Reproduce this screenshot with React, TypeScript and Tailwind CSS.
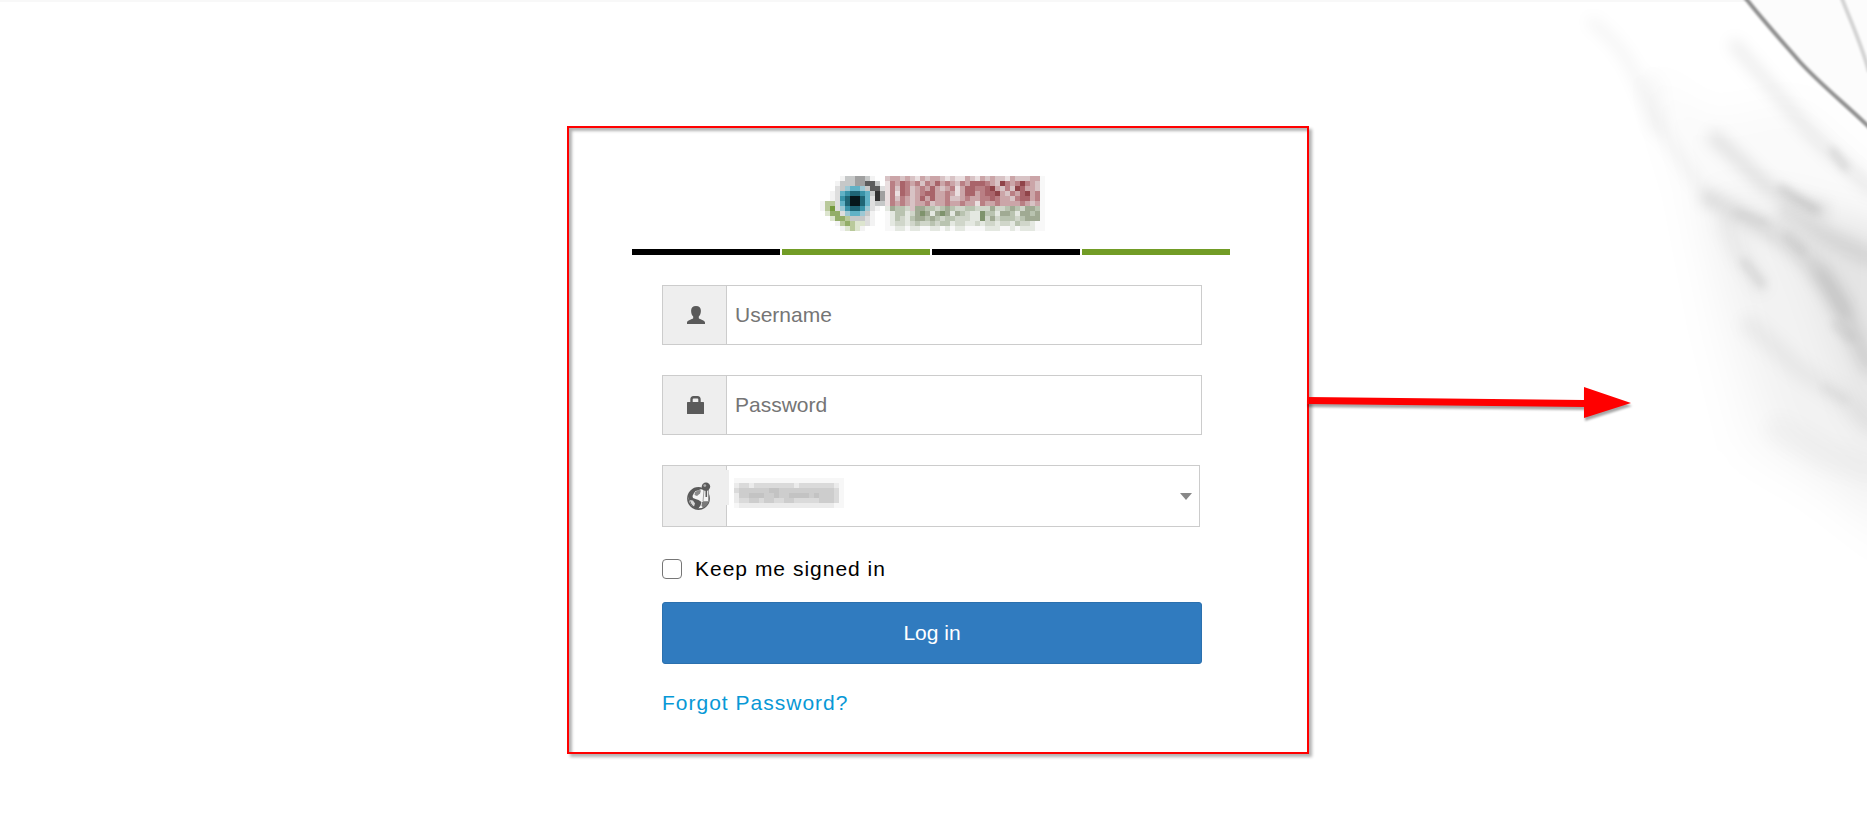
import type { ReactNode } from "react";

const LOGO_COLORS: Record<string, string> = {
  "1": "#f3f3f3",
  "2": "#dedede",
  "3": "#c6c8c8",
  "4": "#a0a0a0",
  "5": "#5c5c5c",
  "6": "#303030",
  a: "#9cc8d4",
  b: "#62b2c6",
  c: "#3a93a8",
  d: "#1f6575",
  e: "#06161a",
  l: "#dde5cf",
  m: "#b9c99b",
  n: "#93ad68",
  o: "#759a3e",
  w: "#f8f8f8",
  p: "#eadfe0",
  q: "#d8c3c5",
  r: "#cba5a8",
  s: "#b97f84",
  t: "#a9646a",
  u: "#904449",
  g: "#e4e8e1",
  h: "#d0d6ca",
  i: "#b9c3b0",
  j: "#a0aa93",
  k: "#7f936d",
};

const LOGO_ROWS = [
  "....1334431..qrrqrqprqrrqpqpprqprqrqqprqqqrrw",
  "...133344553.psrtsrsqsrtrsrqsrtttsrqusrsusrqw",
  "...23abba3552psqtsqrsrtrqrsprttssturqsqutrrqw",
  "..12bcddcb364psptsqrsttrrsrprttrstturqsrtursw",
  "..12cdeedb264psqsrqrtrtrrsqqrsrrsstsrrqsttrsw",
  "1mm2bdeedb233psrsrqrrsqrrsrrsrrpsrrsrrrrsrqrw",
  "1mo2acddca21.gjiihqjjiihijihhiihhhjhhijihjjiw",
  ".lnn2abba31..wgiighjkjgjkjgjihggkiigjjigjjijw",
  "..lnnm33321..wgihgijjijihiihhhggkhjhiiihijjjw",
  "...1mnmll21..wghhghihhihiighhgghghhghhgihhgww",
  "....1lml1....wwggwggwwggwgwggwwwwgggwwgwgggww",
];

const NAME_COLORS: Record<string, string> = {
  "1": "#f7f7f7",
  "2": "#ebebeb",
  "3": "#dadada",
  "4": "#cdcdcd",
  "5": "#c3c3c3",
};

const NAME_ROWS = [
  "1111111111111111111111",
  "2332333333332333333321",
  "3444444554444444444431",
  "2445554454455554544431",
  "2334434433443333344431",
  "1222222222222222222211",
];

interface MosaicProps {
  rows: string[];
  colors: Record<string, string>;
  label: string;
}

function Mosaic({ rows, colors, label }: MosaicProps) {
  const width = rows[0].length * 5;
  const height = rows.length * 5;
  return (
    <svg role="img" aria-label={label} width={width} height={height} shapeRendering="crispEdges">
      {rows.map((row, y) =>
        row.split("").map((cell, x) =>
          colors[cell] ? <rect key={`${x}-${y}`} x={x * 5} y={y * 5} width="5" height="5" fill={colors[cell]} /> : null
        )
      )}
    </svg>
  );
}

function UserIcon() {
  return (
    <svg width="18" height="18" viewBox="0 0 18 18" fill="#5a5a5a" aria-hidden="true">
      <path d="M9 0c3.200 0 4.900 1.700 4.900 4.700 0 2.600-.8 4.600-2.100 5.800v1.700c1 1.300 6.200 1.800 6.200 4.300V18H0v-1.500c0-2.500 5.200-3 6.200-4.300v-1.700C4.900 9.300 4.100 7.300 4.100 4.700 4.100 1.700 5.800 0 9 0z" />
    </svg>
  );
}

function LockIcon() {
  return (
    <svg width="18" height="18" viewBox="0 0 18 18" aria-hidden="true">
      <path d="M4.500 7V3.500Q4.500 1.200 6.500 1.200h4q2 0 2 2.300V7" fill="none" stroke="#5a5a5a" strokeWidth="2.400" />
      <rect y="6" width="17" height="12" rx="0.500" fill="#5a5a5a" />
    </svg>
  );
}

function GlobeIcon() {
  return (
    <svg width="24" height="28" viewBox="0 0 24 28" aria-hidden="true">
      <circle cx="11.500" cy="16.500" r="10.600" fill="#f4f4f4" stroke="#5a5a5a" strokeWidth="1.600" />
      <path d="M1.500 13C3.500 8.500 7 6.300 12 6l2 1-3 1.500L8.500 9 7 11l-1.500 3 .5 2 2.500 1 3 1 3 2-1 3.500-2.500 3.500C5 26 2 22 1.500 13z" fill="#5a5a5a" />
      <path d="M8 10l4-2 2 .5-1 3-3 2.500-2.500-1z" fill="#8a8a8a" />
      <path d="M3 18l3 .5 2 3-1 3C4.800 23 3.500 21 3 18z" fill="#d8d8d8" />
      <path d="M15 20l5-1 1.500 1c-1 2.800-2.800 4.600-5 5.700L14.500 24z" fill="#7a7a7a" />
      <path d="M17 8h4.500v11.500H16z" fill="#f4f4f4" stroke="#8a8a8a" strokeWidth="0.800" />
      <path d="M19.300 8v7" stroke="#5a5a5a" strokeWidth="1.600" />
      <circle cx="19" cy="4.600" r="4.200" fill="#5a5a5a" />
      <circle cx="17.800" cy="3.600" r="1.400" fill="#aaa" />
    </svg>
  );
}

function Field({ id, icon, children }: { id: string; icon: ReactNode; children: ReactNode }) {
  return (
    <div className="relative flex border border-[#cccccc] bg-white">
      <label htmlFor={id} className="flex w-16 shrink-0 items-center border-r border-[#cccccc] bg-[#eeeeee] pl-6">
        {icon}
      </label>
      {children}
    </div>
  );
}

function Backdrop() {
  return (
    <svg className="pointer-events-none absolute right-0 top-0" width="307" height="600" viewBox="0 0 307 600" fill="none" aria-hidden="true">
      <defs>
        <filter id="haze" x="-50%" y="-50%" width="200%" height="200%">
          <feGaussianBlur stdDeviation="18" />
        </filter>
        <filter id="smear" x="-50%" y="-50%" width="200%" height="200%">
          <feGaussianBlur stdDeviation="7" />
        </filter>
        <filter id="streak" x="-50%" y="-50%" width="200%" height="200%">
          <feGaussianBlur stdDeviation="4" />
        </filter>
        <filter id="soft" x="-50%" y="-50%" width="200%" height="200%">
          <feGaussianBlur stdDeviation="1" />
        </filter>
      </defs>
      <g filter="url(#haze)" fill="#000">
        <path d="M85 70L150 120 240 100 340 190V560L250 490 180 450 150 330 125 200z" opacity="0.020" />
        <path d="M145 195L220 195 330 235V520L280 480 220 440 185 340z" opacity="0.035" />
        <path d="M225 210L340 230V460L300 420 260 300z" opacity="0.060" />
      </g>
      <g filter="url(#smear)" stroke="#000" strokeLinecap="round">
        <path d="M32 22Q62 45 75 75T98 125L125 165 150 202" strokeWidth="10" opacity="0.045" />
        <path d="M92 85L98 125" strokeWidth="22" opacity="0.020" />
        <path d="M150 198Q180 215 205 228T250 262 285 315 310 365" strokeWidth="18" opacity="0.090" />
        <path d="M155 138Q185 165 200 180T262 210" strokeWidth="15" opacity="0.090" />
        <path d="M225 212L270 238 312 258" strokeWidth="16" opacity="0.080" />
        <path d="M175 45Q210 85 235 115T280 160L312 190" strokeWidth="12" opacity="0.070" />
        <path d="M262 275L285 310" strokeWidth="20" opacity="0.060" />
        <path d="M165 225L180 255 200 285" strokeWidth="18" opacity="0.040" />
        <path d="M190 325L240 370 285 400 312 425" strokeWidth="20" opacity="0.040" />
        <path d="M220 430L265 455 312 470" strokeWidth="30" opacity="0.020" />
      </g>
      <g filter="url(#streak)" stroke="#000" strokeLinecap="round">
        <path d="M222 188L240 200 256 210" strokeWidth="7" opacity="0.110" />
        <path d="M272 150L286 168" strokeWidth="5" opacity="0.150" />
        <path d="M184 262L202 284" strokeWidth="8" opacity="0.080" />
        <path d="M178 213L205 222" strokeWidth="8" opacity="0.050" />
        <path d="M228 236L242 250" strokeWidth="8" opacity="0.060" />
        <path d="M275 325L290 338" strokeWidth="8" opacity="0.060" />
        <path d="M265 388L285 400" strokeWidth="8" opacity="0.040" />
      </g>
      <path d="M186 0L307 0V124C275 95 225 45 186 0z" fill="#fcfcfc" />
      <g filter="url(#soft)">
        <path d="M184-4C200 17 220 39 240 62 262 86 290 108 312 130" stroke="#000" strokeWidth="4" opacity="0.440" />
        <path d="M281-4C290 20 302 45 309 72" stroke="#000" strokeWidth="4" opacity="0.160" />
      </g>
    </svg>
  );
}

function Arrow() {
  return (
    <svg
      className="pointer-events-none absolute left-full top-[253px] overflow-visible drop-shadow-[1px_3px_1px_rgba(0,0,0,0.35)]"
      width="324"
      height="40"
      viewBox="0 0 324 40"
      fill="#ff0000"
      aria-hidden="true"
    >
      <path d="M0 16L277 19V6L324 22 277 37V26L0 23z" />
    </svg>
  );
}

export default function App() {
  return (
    <div className="relative min-h-screen overflow-hidden bg-white font-['Liberation_Sans',Arial,sans-serif] text-[21px] leading-7 text-black">
      <div className="h-0.5 bg-[#f8f8f8]" />
      <Backdrop />

      <main className="flex justify-center pb-10 pl-[25px] pr-4 pt-[124px]">
        <div className="relative w-full max-w-[742px] border-2 border-[#ff0000] pb-[35px] pl-[63px] pr-[77px] pt-12 shadow-[3px_3px_3px_rgba(0,0,0,0.3),inset_3px_3px_3px_rgba(0,0,0,0.3)]">
          <h1 className="flex justify-center pl-0.5">
            <Mosaic rows={LOGO_ROWS} colors={LOGO_COLORS} label="Development Tracker" />
          </h1>

          <div className="mt-[18px] grid grid-cols-4 gap-0.5">
            <span className="h-1.5 bg-black" />
            <span className="h-1.5 bg-[#729c26]" />
            <span className="h-1.5 bg-black" />
            <span className="h-1.5 bg-[#729c26]" />
          </div>

          <form className="ml-[30px] mr-7 mt-[30px]" onSubmit={(e) => e.preventDefault()}>
            <div className="flex flex-col gap-[30px]">
              <Field id="username" icon={<UserIcon />}>
                <input
                  id="username"
                  type="text"
                  aria-label="Username"
                  placeholder="Username"
                  className="h-[58px] w-full min-w-0 px-2 outline-none placeholder:text-[#757575]"
                />
              </Field>

              <Field id="password" icon={<LockIcon />}>
                <input
                  id="password"
                  type="password"
                  aria-label="Password"
                  placeholder="Password"
                  className="h-[58px] w-full min-w-0 px-2 outline-none placeholder:text-[#757575]"
                />
              </Field>

              <div className="pr-0.5">
                <Field id="company" icon={<GlobeIcon />}>
                  <select id="company" aria-label="Company" className="h-[60px] w-full min-w-0 appearance-none px-2 outline-none">
                    <option value=""></option>
                  </select>
                  <span className="pointer-events-none absolute left-[63px] top-1 h-[35px] w-[3px] bg-[#eeeeee]" />
                  <span className="pointer-events-none absolute left-[71px] top-3">
                    <Mosaic rows={NAME_ROWS} colors={NAME_COLORS} label="Selected company" />
                  </span>
                  <svg className="pointer-events-none absolute right-[7px] top-[27px]" width="12" height="7" fill="#888888" aria-hidden="true">
                    <path d="M0 0h12L6 7z" />
                  </svg>
                </Field>
              </div>
            </div>

            <div className="mt-[27px] flex h-[30px] items-center gap-[13px]">
              <input
                id="remember"
                type="checkbox"
                className="size-5 appearance-none rounded-[4px] border border-[#767676] bg-white checked:bg-[#307bbf]"
              />
              <label htmlFor="remember" className="tracking-[1px]">
                Keep me signed in
              </label>
            </div>

            <button type="submit" className="mt-[18px] h-[62px] w-full rounded-[3px] border border-[#2b70ae] bg-[#307bbf] text-white">
              Log in
            </button>

            <div className="mt-[25px]">
              <a href="#forgot" className="tracking-[1px] text-[#0898d6]">
                Forgot Password?
              </a>
            </div>
          </form>

          <Arrow />
        </div>
      </main>
    </div>
  );
}
